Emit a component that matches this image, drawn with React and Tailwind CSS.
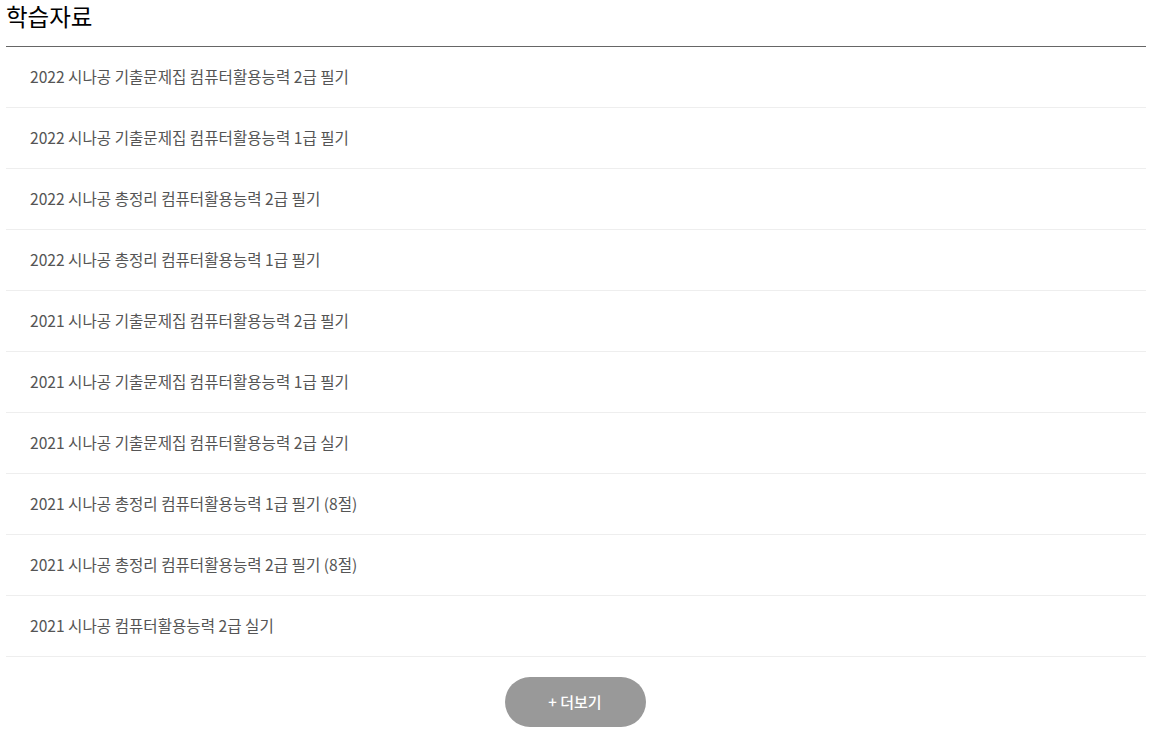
const items = [
    '2022 시나공 기출문제집 컴퓨터활용능력 2급 필기',
    '2022 시나공 기출문제집 컴퓨터활용능력 1급 필기',
    '2022 시나공 총정리 컴퓨터활용능력 2급 필기',
    '2022 시나공 총정리 컴퓨터활용능력 1급 필기',
    '2021 시나공 기출문제집 컴퓨터활용능력 2급 필기',
    '2021 시나공 기출문제집 컴퓨터활용능력 1급 필기',
    '2021 시나공 기출문제집 컴퓨터활용능력 2급 실기',
    '2021 시나공 총정리 컴퓨터활용능력 1급 필기 (8절)',
    '2021 시나공 총정리 컴퓨터활용능력 2급 필기 (8절)',
    '2021 시나공 컴퓨터활용능력 2급 실기',
];

const App = () => {
    return (
        <div className="min-h-screen bg-white pl-[6px] pr-[4px] font-['Noto_Sans_CJK_KR','Noto_Sans',sans-serif]">
            <div className="h-[47px] border-b border-[#666]">
                <h2 className="text-[23.5px] leading-[32px] text-black">학습자료</h2>
            </div>

            <ul>
                {items.map((item, i) => (
                    <li key={i} className="h-[61px] border-b border-[#eee] flex items-center pl-[24px]">
                        <a href="#" className="text-[15.6px] text-[#555]">{item}</a>
                    </li>
                ))}
            </ul>

            <div className="flex justify-center mt-[20px]">
                <button className="w-[141px] h-[50px] -ml-[2px] rounded-full bg-[#999] text-white text-[15px] font-medium">
                    + 더보기
                </button>
            </div>
        </div>
    );
};

export default App;
